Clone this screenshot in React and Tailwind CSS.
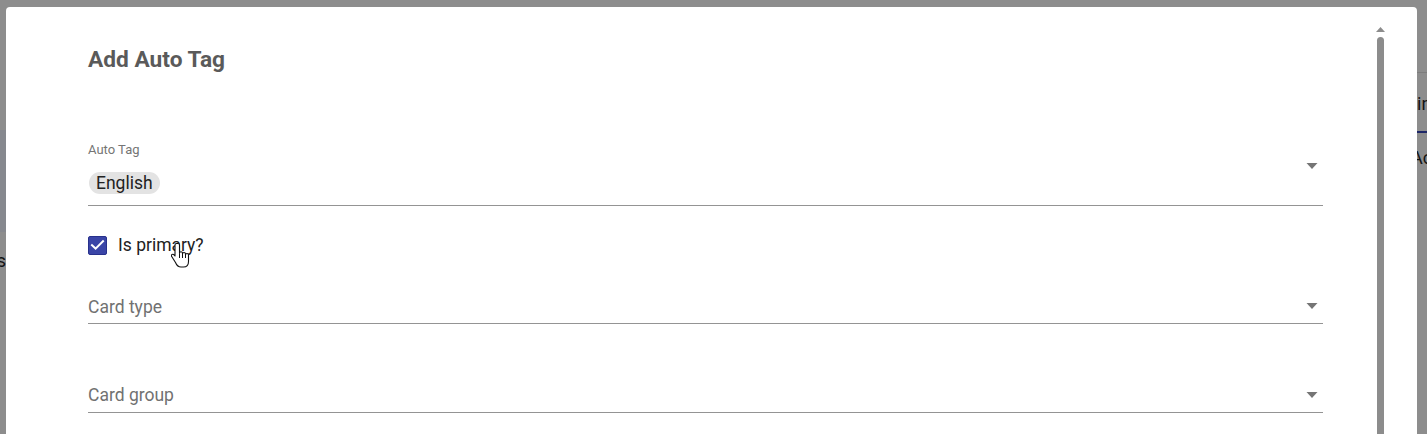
import React from "react";

function DropArrow() {
  return (
    <svg width="12" height="6" viewBox="0 0 12 6" className="block">
      <path d="M0.5 0 L11.5 0 L6 6 Z" fill="#757575" />
    </svg>
  );
}

function HandCursor() {
  return (
    <svg width="19" height="27" viewBox="0 0 19 27" className="block">
      <path
        d="M5.5 1.5 C4.7 1.5 4 2.2 4 3 V14 L3 12.8 C2.4 12.1 1.4 12 0.8 12.6 C0.3 13.1 0.3 13.9 0.7 14.5 L4.5 20.5 C5.5 23 7 25 10 25 H12.5 C15.5 25 17.5 22.8 17.5 19.5 V13 C17.5 12.2 16.9 11.5 16 11.5 C15.2 11.5 14.5 12.2 14.5 13 V12 C14.5 11.2 13.8 10.5 13 10.5 C12.2 10.5 11.5 11.2 11.5 12 V11.3 C11.5 10.5 10.8 9.8 10 9.8 C9.2 9.8 8.5 10.5 8.5 11.3 V3 C8.5 2.2 7.8 1.5 7 1.5 Z"
        fill="#ffffff"
        stroke="#111111"
        strokeWidth="1.1"
        strokeLinejoin="round"
      />
      <path d="M8.5 11.3 V16 M11.5 12 V16 M14.5 13 V16" stroke="#111111" strokeWidth="1" fill="none" />
    </svg>
  );
}

export default function App() {
  return (
    <div className="relative w-[1427px] h-[434px] overflow-hidden bg-[#8d8d8d] font-['Roboto','Liberation_Sans',sans-serif]">
      {/* page behind the backdrop */}
      <div className="flex h-full justify-between">
        <div className="w-[6px] flex flex-col">
          <div className="h-[130px]" />
          <div className="h-[102px] bg-[#86888e]" />
          <div className="mt-[17px] flex justify-end overflow-hidden whitespace-nowrap text-[18px] leading-[24px] text-[#121212]">
            Items
          </div>
        </div>
        <div className="w-[10px] flex flex-col overflow-hidden">
          <div className="h-[73px] border-b border-[#7d7d7d]" />
          <div className="mt-[19px] h-[24px] whitespace-nowrap text-[18px] leading-[24px] text-[#141414]">
            in
          </div>
          <div className="mt-[15px] h-[2px] bg-[#1e2767]" />
          <div className="mt-[13px] h-[24px] -ml-[6px] whitespace-nowrap text-[18px] leading-[24px] text-[#141414]">
            Ac
          </div>
        </div>
      </div>

      {/* dialog */}
      <div className="absolute left-[6px] top-[7px] w-[1411px] h-[460px] bg-white rounded-[4px] flex">
        <div className="w-[1317px] pl-[82px] pt-[39px]">
          <h2 className="text-[22.7px] leading-[28px] font-bold text-[#5a5a5a]">Add Auto Tag</h2>

          <div className="mt-[68px] flex border-b border-[#949494] pb-[11px]">
            <div className="flex flex-col">
              <div className="text-[13px] leading-[16px] text-[#757575]">Auto Tag</div>
              <div className="mt-[14px] ml-[1px] self-start h-[22px] px-[7px] rounded-full bg-[#e3e3e3] flex items-center text-[17.5px] leading-[22px] text-[#222222]">
                English
              </div>
            </div>
            <div className="ml-auto mr-[5px] mt-[21px] self-start">
              <DropArrow />
            </div>
          </div>

          <div className="mt-[27px] flex items-center h-[24px]">
            <div className="w-[19px] h-[19px] rounded-[2px] bg-[#3a45a7] border border-[#28318c] flex items-center justify-center">
              <svg width="15" height="12" viewBox="0 0 15 12" className="block">
                <path d="M2 6.2 L5.6 9.6 L13 2.2" stroke="#ffffff" strokeWidth="2" fill="none" strokeLinecap="square" />
              </svg>
            </div>
            <span className="ml-[11px] text-[17.5px] leading-[24px] text-[#222222]">Is primary?</span>
          </div>

          <div className="mt-[38px] flex border-b border-[#949494] pb-[4px]">
            <span className="text-[17.5px] leading-[24px] text-[#717171]">Card type</span>
            <div className="ml-auto mr-[5px] mt-[8px] self-start">
              <DropArrow />
            </div>
          </div>

          <div className="mt-[59px] flex border-b border-[#949494] pb-[5px]">
            <span className="text-[17.5px] leading-[24px] text-[#717171]">Card group</span>
            <div className="ml-auto mr-[5px] mt-[9px] self-start">
              <DropArrow />
            </div>
          </div>
        </div>

        {/* scrollbar */}
        <div className="ml-[53px] w-[9px] pt-[20px] flex flex-col items-center">
          <svg width="9" height="5" viewBox="0 0 9 5" className="block">
            <path d="M0 5 L4.5 0 L9 5 Z" fill="#8c8c8c" />
          </svg>
          <div className="mt-[5px] w-[7px] flex-1 rounded-t-full bg-[#8c8c8c]" />
        </div>
      </div>

      {/* pointer cursor */}
      <div className="absolute left-[171px] top-[242px]">
        <HandCursor />
      </div>
    </div>
  );
}
